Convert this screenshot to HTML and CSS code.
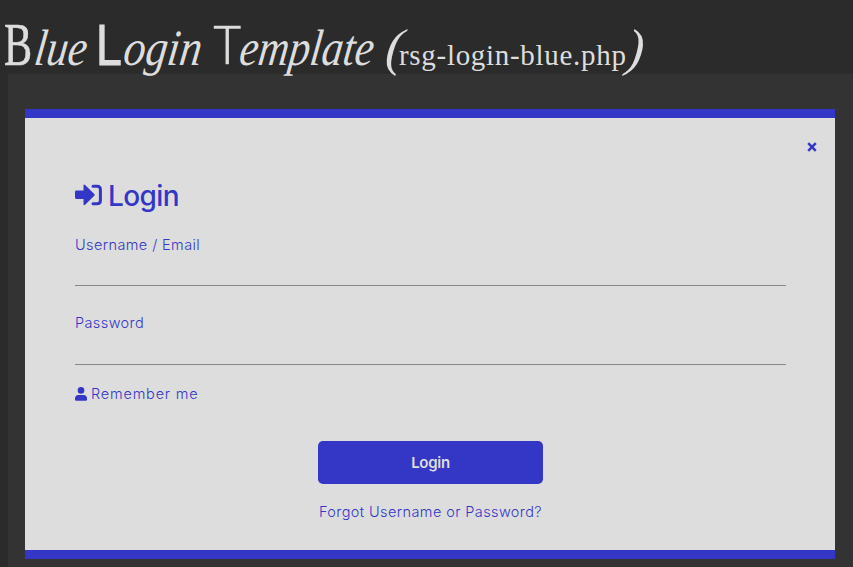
FILE: index.html
```
<!DOCTYPE html>
<html lang="en">
<head>
<meta charset="utf-8">
<title>Blue Login Template</title>
<link rel="stylesheet" href="styles.css">
</head>
<body>
<h1 class="title"><span class="initial b">B</span><span class="rest blue">lue</span> <span class="initial l">L</span><span class="rest login">ogin</span> <span class="initial t">T</span><span class="rest template">emplate</span> <span class="paren open">(</span><span class="file">rsg-login-blue.php</span><span class="paren">)</span></h1>
<main class="page">
  <form class="panel">
    <svg class="close" viewBox="0 0 10 10" role="img" aria-label="Close"><path d="M1.200 1.200l7.600 7.600M8.800 1.200L1.200 8.800"/></svg>
    <h2 class="heading">
      <svg class="signin" viewBox="0 0 28 22" aria-hidden="true"><path class="solid" d="M1.300 6.600H8.500V1.700q0-2 1.600-.8l9.200 9q.8.900 0 1.800l-9.200 9Q8.500 21.900 8.500 19.900v-5H1.300Q0 14.900 0 13.600V8Q0 6.600 1.300 6.600z"/><path class="bracket" d="M18 2.200h4.200q3.200 0 3.200 3.200v11.200q0 3.200-3.200 3.200H18"/></svg>
      <span class="heading-text">Login</span>
    </h2>
    <label class="field"><span class="text username">Username / Email</span><input class="input" type="text"></label>
    <label class="field second"><span class="text password">Password</span><input class="input" type="password"></label>
    <div class="remember">
      <svg class="user" viewBox="0 0 12 14" aria-hidden="true"><circle cx="6" cy="3.400" r="3.300"/><path d="M3.500 7.900h5Q12 8.300 12 11.500V12.500q0 1.300-1.300 1.300H1.300Q0 13.800 0 12.500v-1Q0 8.300 3.500 7.900z"/></svg>
      <span class="text rememberme">Remember me</span>
    </div>
    <button class="submit" type="button">Login</button>
    <a class="text forgot">Forgot Username or Password?</a>
  </form>
</main>
</body>
</html>
```
FILE: styles.css
```
* { box-sizing: border-box; }
html { overflow: hidden; background: #2b2b2b; }
body { margin: 0; height: 567px; color: #ddd; font-family: Inter, "Liberation Sans", sans-serif; }
.title {
  display: flex; align-items: baseline; height: 74px; margin: 0; padding: 14px 0 0 4px;
  font: italic 400 51px/60px "Liberation Serif", serif; white-space: nowrap;
}
.initial, .rest { flex: none; transform-origin: 0 47px; }
.initial { font-style: normal; font-size: 62px; }
.b { width: 29px; transform: scaleX(0.68); -webkit-text-stroke: 0.6px #ddd; }
.l { width: 23px; font-family: "Liberation Sans", sans-serif; font-size: 58px; transform: translateX(-3px) scaleX(0.8); -webkit-text-stroke: 1px #ddd; }
.t { width: 26px; font-family: "Liberation Sans", sans-serif; font-size: 58px; transform: scaleX(0.86); -webkit-text-stroke: 1.5px #2b2b2b; }
.rest { transform: scaleX(0.86) skewX(-9deg); }
.blue { width: 66px; transform: scaleX(0.84) skewX(-9deg); }
.login { width: 90px; }
.template { width: 148px; transform: scaleX(0.83) skewX(-9deg); }
.paren { font-size: 52px; transform: skewX(-5deg); }
.open { width: 13px; }
.file { font-style: normal; font-size: 29px; letter-spacing: 0.7px; }
.page { height: 493px; margin-left: 8px; padding: 35px 18px 0 17px; background: #333; }
.panel {
  position: relative; display: flex; flex-direction: column; height: 450px; padding: 58px 49px 0 50px;
  background: #ddd; color: #3437c6; border: solid #3437c6; border-width: 9px 0;
}
.close { position: absolute; top: 24px; right: 18px; width: 10px; height: 10px; stroke: currentColor; stroke-width: 2.5; }
.heading { display: flex; align-items: center; gap: 5px; height: 38px; margin: 0; }
.signin { width: 28px; height: 22px; }
.heading-text { padding-top: 1px; font-size: 28px; font-weight: 500; line-height: 38px; letter-spacing: -0.6px; }
.solid { fill: currentColor; }
.bracket { fill: none; stroke: currentColor; stroke-width: 3; stroke-linecap: round; }
.text { font-size: 14.5px; font-weight: 300; line-height: 22px; white-space: nowrap; }
.username { letter-spacing: 0.4px; }
.password { letter-spacing: 0.4px; }
.rememberme { letter-spacing: 0.8px; }
.field { display: flex; flex-direction: column; margin-top: 20px; }
.second { margin-top: 26px; }
.input { width: 100%; height: 30px; padding: 0; border: 0; border-bottom: 1px solid #888; background: transparent; outline: 0; }
.second .input { height: 31px; }
.remember { display: flex; align-items: center; gap: 4px; margin-top: 18px; }
.user { width: 12px; height: 14px; fill: currentColor; }
.submit {
  align-self: center; width: 225px; height: 43px; margin-top: 36px; padding: 0; border: 0; border-radius: 5px;
  background: #3437c6; color: #ddd; font: 600 15px/43px Inter, sans-serif; letter-spacing: -0.3px;
}
.forgot { align-self: center; margin-top: 17px; letter-spacing: 0.4px; }
```
